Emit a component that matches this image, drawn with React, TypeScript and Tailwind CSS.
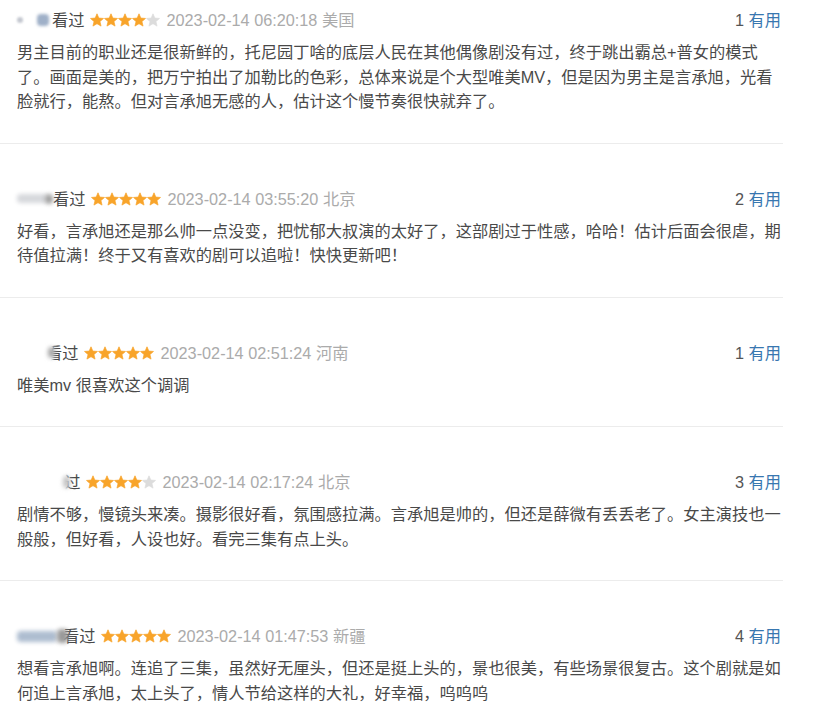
import React from "react";

type Review = {
  stars: number;
  time: string;
  loc: string;
  votes: number;
  lines: string[];
  userW: number;
  user?: React.ReactNode;
  overlay?: React.ReactNode;
};

function Star({ on }: { on: boolean }) {
  const c = on ? "#f8a42a" : "#dcdcdc";
  return (
    <svg width="14" height="14" viewBox="0 0 14 14" className="shrink-0 overflow-visible">
      <polygon
        points="7,0.8 8.82,5.09 13.5,5.44 9.95,8.56 11.05,13.1 7,10.7 2.95,13.1 4.05,8.56 0.5,5.44 5.18,5.09"
        fill={c}
        stroke={c}
        strokeWidth="0.7"
        strokeLinejoin="round"
      />
    </svg>
  );
}

const reviews: Review[] = [
  {
    stars: 4,
    time: "2023-02-14 06:20:18",
    loc: "美国",
    votes: 1,
    userW: 35,
    user: (
      <>
        <span className="h-[6px] w-[6px] rounded-full bg-[#c4c8d0] blur-[1px]" />
        <span className="ml-[14px] h-[12px] w-[12px] rounded-sm bg-[#9fb0c8] blur-[1.5px]" />
      </>
    ),
    lines: [
      "男主目前的职业还是很新鲜的，托尼园丁啥的底层人民在其他偶像剧没有过，终于跳出霸总+普女的模式",
      "了。画面是美的，把万宁拍出了加勒比的色彩，总体来说是个大型唯美MV，但是因为男主是言承旭，光看",
      "脸就行，能熬。但对言承旭无感的人，估计这个慢节奏很快就弃了。",
    ],
  },
  {
    stars: 5,
    time: "2023-02-14 03:55:20",
    loc: "北京",
    votes: 2,
    userW: 36,
    user: (
      <>
        <span className="h-[9px] w-[30px] rounded-sm bg-[#d6d8dc] blur-[2px]" />
        <span className="-ml-[2px] h-[10px] w-[8px] rounded-sm bg-[#a0a0a0] blur-[2px]" />
      </>
    ),
    lines: [
      "好看，言承旭还是那么帅一点没变，把忧郁大叔演的太好了，这部剧过于性感，哈哈！估计后面会很虐，期",
      "待值拉满！终于又有喜欢的剧可以追啦！快快更新吧！",
    ],
  },
  {
    stars: 5,
    time: "2023-02-14 02:51:24",
    loc: "河南",
    votes: 1,
    userW: 29,
    overlay: (
      <>
        <span className="absolute left-[0px] top-[0px] h-[20px] w-[36px] bg-white blur-[1px]" />
        <span className="absolute left-[31px] top-[4px] h-[11px] w-[7px] rounded-sm bg-[#a8a8a8] blur-[2px]" />
      </>
    ),
    lines: ["唯美mv 很喜欢这个调调"],
  },
  {
    stars: 4,
    time: "2023-02-14 02:17:24",
    loc: "北京",
    votes: 3,
    userW: 31,
    overlay: (
      <>
        <span className="absolute left-[0px] top-[0px] h-[20px] w-[50px] bg-white blur-[1px]" />
        <span className="absolute left-[46px] top-[4px] h-[12px] w-[7px] rounded-sm bg-[#c4c4c4] blur-[2px]" />
      </>
    ),
    lines: [
      "剧情不够，慢镜头来凑。摄影很好看，氛围感拉满。言承旭是帅的，但还是薛微有丢丢老了。女主演技也一",
      "般般，但好看，人设也好。看完三集有点上头。",
    ],
  },
  {
    stars: 5,
    time: "2023-02-14 01:47:53",
    loc: "新疆",
    votes: 4,
    userW: 46,
    overlay: (
      <>
        <span className="absolute left-[0px] top-[5px] h-[11px] w-[40px] rounded-sm bg-[#aebdd0] blur-[2px]" />
        <span className="absolute left-[40px] top-[3px] h-[14px] w-[11px] rounded-sm bg-[#9a9a9a] blur-[2px]" />
      </>
    ),
    lines: [
      "想看言承旭啊。连追了三集，虽然好无厘头，但还是挺上头的，景也很美，有些场景很复古。这个剧就是如",
      "何追上言承旭，太上头了，情人节给这样的大礼，好幸福，呜呜呜",
    ],
  },
];

export default function App() {
  return (
    <div className="min-h-[715px] w-[832px] bg-white font-['Liberation_Sans','Noto_Sans_CJK_SC',sans-serif]">
      <div className="flex w-[783px] flex-col">
        {reviews.map((r, i) => (
          <div
            key={i}
            className={`border-b border-[#ececec] pl-[17px] pr-[2px] pb-[29px] ${i === 0 ? "pt-[10px]" : "pt-[45px]"}`}
          >
            <div className="relative flex h-5 items-center text-[16.25px] leading-5">
              <span className="flex h-5 shrink-0 items-center" style={{ width: r.userW }}>
                {r.user}
              </span>
              <span className="text-[#494949]">看过</span>
              <span className="ml-[5px] flex">
                {[0, 1, 2, 3, 4].map((k) => (
                  <Star key={k} on={k < r.stars} />
                ))}
              </span>
              <span className="ml-[7px] text-[#ababab]">
                {r.time} {r.loc}
              </span>
              <span className="ml-auto text-[#555]">
                {r.votes} <span className="text-[#3877b0]">有用</span>
              </span>
              {r.overlay && <span className="pointer-events-none absolute inset-0">{r.overlay}</span>}
            </div>
            <div className="mt-[10px] text-[16.25px] leading-[24.5px] text-[#494949]">
              {r.lines.map((l, k) => (
                <div key={k} className="whitespace-nowrap">
                  {l}
                </div>
              ))}
            </div>
          </div>
        ))}
      </div>
    </div>
  );
}
